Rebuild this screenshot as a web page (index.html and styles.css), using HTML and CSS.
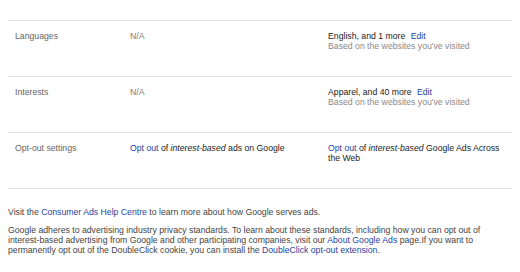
FILE: index.html
```html
<!DOCTYPE html>
<html>
<head>
<meta charset="utf-8">
<link rel="stylesheet" href="styles.css">
</head>
<body>
<div class="page">
  <div class="settings">
    <div class="row">
      <div class="label">Languages</div>
      <div class="mid">N/A</div>
      <div class="right">
        <div class="value">English, and 1 more <a class="link edit" href="#">Edit</a></div>
        <div class="note">Based on the websites you've visited</div>
      </div>
    </div>
    <div class="row">
      <div class="label">Interests</div>
      <div class="mid">N/A</div>
      <div class="right">
        <div class="value">Apparel, and 40 more <a class="link edit" href="#">Edit</a></div>
        <div class="note">Based on the websites you've visited</div>
      </div>
    </div>
    <div class="row">
      <div class="label">Opt-out settings</div>
      <div class="mid value"><a class="link" href="#">Opt out</a> of <i>interest-based</i> ads on Google</div>
      <div class="right value"><a class="link" href="#">Opt out</a> of <i>interest-based</i> Google Ads Across the Web</div>
    </div>
  </div>
  <div class="footer">
    <p class="visit">Visit the <a class="link" href="#">Consumer Ads Help Centre</a> to learn more about how Google serves ads.</p>
    <p class="policy">Google adheres to advertising industry privacy standards. To learn about these standards, including how you can opt out of interest-based advertising from Google and other participating companies, visit our <a class="link" href="#">About Google Ads</a> page.If you want to permanently opt out of the DoubleClick cookie, you can install the <a class="link" href="#">DoubleClick opt-out extension</a>.</p>
  </div>
</div>
</body>
</html>
```

FILE: styles.css
```css
html, body {
  margin: 0;
  padding: 0;
  background: #ffffff;
}
body {
  font-family: "Liberation Sans", Arial, Helvetica, sans-serif;
  font-size: 8.7px;
  color: #333333;
}
.page {
  padding: 20px 8px 0 8px;
}
.settings {
  border-bottom: 1px solid #e4e4e4;
}
.row {
  display: grid;
  grid-template-columns: 115px 198px 1fr;
  border-top: 1px solid #e4e4e4;
  padding: 10px 10px 0 7px;
  height: 45px;
  line-height: 10px;
}
.label {
  color: #666666;
}
.mid {
  color: #777777;
}
.value {
  color: #222222;
}
.note {
  color: #8a8a8a;
}
.link {
  color: #1f44a0;
  text-decoration: none;
}
.edit {
  margin-left: 3px;
}
.footer {
  color: #444444;
  line-height: 10px;
  padding-right: 24px;
}
.footer p {
  margin: 0;
}
.visit {
  padding-top: 18px;
}
.policy {
  padding-top: 8px;
}
```
